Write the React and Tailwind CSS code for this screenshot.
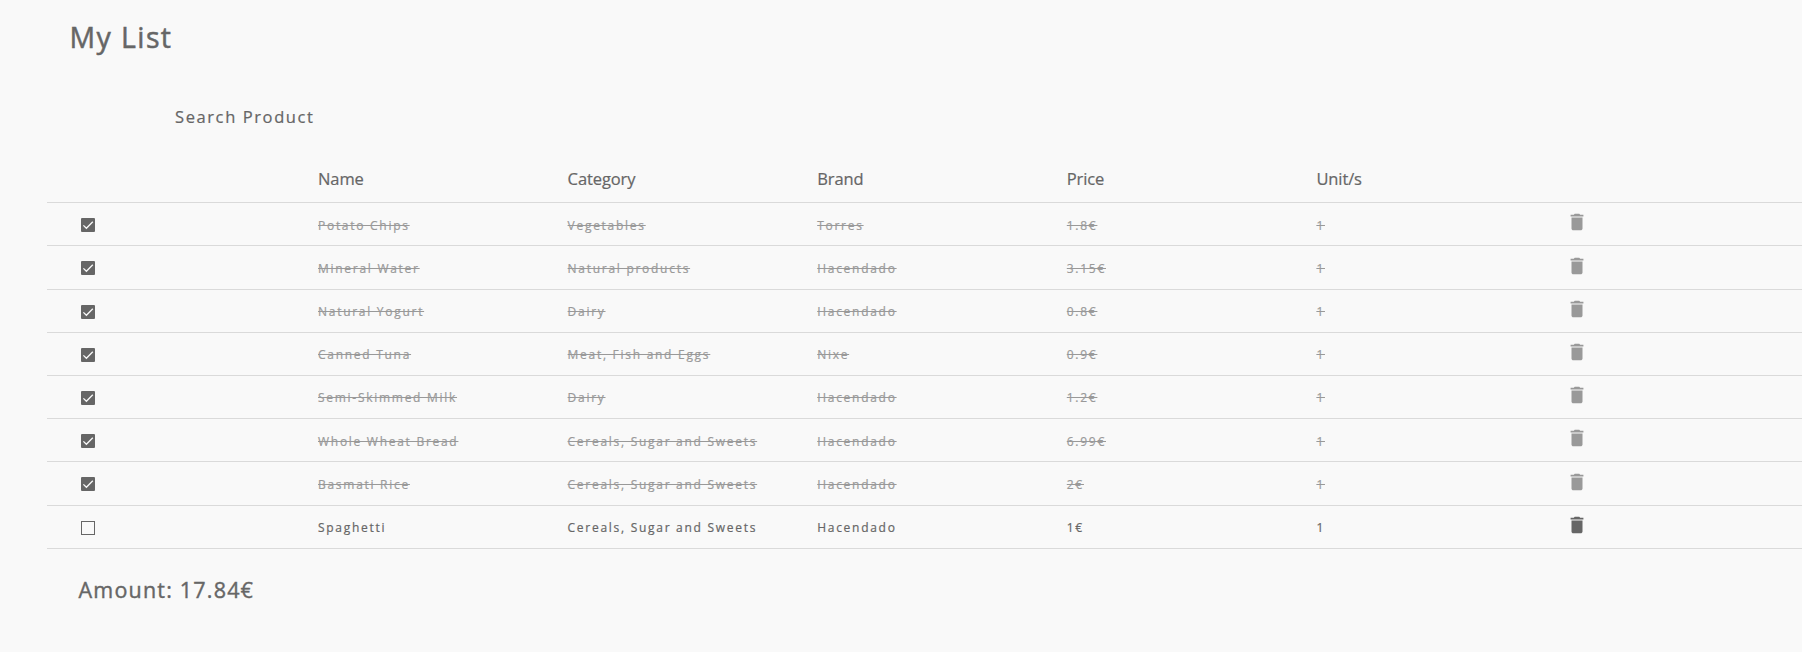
import React from "react";
import { MdDelete } from "react-icons/md";

const items = [
  ["Potato Chips", "Vegetables", "Torres", "1.8€", "1", true],
  ["Mineral Water", "Natural products", "Hacendado", "3.15€", "1", true],
  ["Natural Yogurt", "Dairy", "Hacendado", "0.8€", "1", true],
  ["Canned Tuna", "Meat, Fish and Eggs", "Nixe", "0.9€", "1", true],
  ["Semi-Skimmed Milk", "Dairy", "Hacendado", "1.2€", "1", true],
  ["Whole Wheat Bread", "Cereals, Sugar and Sweets", "Hacendado", "6.99€", "1", true],
  ["Basmati Rice", "Cereals, Sugar and Sweets", "Hacendado", "2€", "1", true],
  ["Spaghetti", "Cereals, Sugar and Sweets", "Hacendado", "1€", "1", false],
];

const columns = "grid grid-cols-[271px_249.6px_249.6px_249.6px_249.6px_249.6px_1fr]";

function Checkbox({ checked }) {
  return (
    <svg width="14" height="14" viewBox="0 0 14 14" className="mt-[15px] ml-[34px] block text-[#666]" role="checkbox" aria-checked={checked}>
      {checked ? (
        <>
          <rect width="14" height="14" rx="1" fill="currentColor" />
          <path d="M2.4 7.4 5.4 10.3 11.8 3.7" fill="none" stroke="#f9f9f9" strokeWidth="1.3" />
        </>
      ) : (
        <rect x=".5" y=".5" width="13" height="13" fill="none" stroke="currentColor" shapeRendering="crispEdges" />
      )}
    </svg>
  );
}

export default function App() {
  return (
    <main className="h-[652px] overflow-hidden bg-[#f9f9f9] pl-[47px] font-['Open_Sans','Noto_Sans',sans-serif] text-[#666]">
      <h1 className="flex h-[74px] items-center pl-[22.5px] text-[28.5px] tracking-[1.4px] [-webkit-text-stroke:0.5px]">My List</h1>
      <div className="flex h-[86px] items-center pl-[128px] text-[16.5px] tracking-[1.6px] [-webkit-text-stroke:0.2px]">Search Product</div>
      <div className={`${columns} h-[42px] pt-[7px] text-[16.5px] leading-6 tracking-[-0.1px] [-webkit-text-stroke:0.2px]`}>
        <span />
        {["Name", "Category", "Brand", "Price", "Unit/s"].map((h) => <span key={h}>{h}</span>)}
      </div>
      <div className="border-t border-[#dadada] pt-[0.2px]">
        {items.map(([name, category, brand, price, units, done]) => (
          <div key={name} className={`${columns} h-[43.2px] border-b border-[#dadada] text-[12px] tracking-[1.72px] [-webkit-text-stroke:0.2px]`}>
            <Checkbox checked={done} />
            {[name, category, brand, price, units].map((t, i) => (
              <div key={i} className={`pt-[13.5px] leading-[18px] ${done ? "text-[#999] line-through" : ""}`}>{t}</div>
            ))}
            <MdDelete size={22} className={`mt-[8.3px] ${done ? "text-[#999]" : ""}`} />
          </div>
        ))}
      </div>
      <div className="flex h-[83px] items-center pl-[31.5px] text-[21.5px] tracking-[1.2px] [-webkit-text-stroke:0.4px]">Amount: 17.84€</div>
    </main>
  );
}
